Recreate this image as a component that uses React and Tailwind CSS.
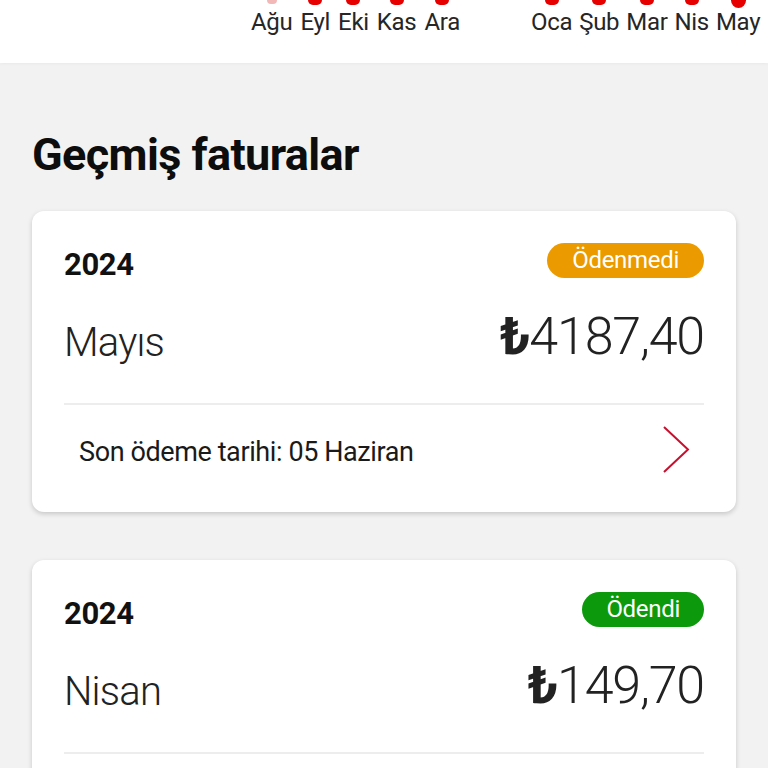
const GROUP_A = [
  { m: 'Ağu', faint: true },
  { m: 'Eyl' },
  { m: 'Eki' },
  { m: 'Kas' },
  { m: 'Ara' },
];
const GROUP_B = [
  { m: 'Oca' },
  { m: 'Şub' },
  { m: 'Mar' },
  { m: 'Nis' },
  { m: 'May', current: true },
];

const BILLS = [
  { year: '2024', month: 'Mayıs', amount: '4187,40', paid: false, due: 'Son ödeme tarihi: 05 Haziran' },
  { year: '2024', month: 'Nisan', amount: '149,70', paid: true, due: 'Ödeme tarihi: 02 Mayıs' },
];

function Month({ m, faint, current }) {
  let bar = 'h-[5px] w-[14px] rounded-b-full bg-[#e60000]';
  if (faint) bar = 'h-[4px] w-[10px] rounded-b-full bg-[#f2b8b8]';
  if (current) bar = 'h-[8px] w-[15px] rounded-b-full bg-[#e60000]';
  return (
    <div className="flex flex-col items-center">
      <div className="flex h-[5px] items-start overflow-visible">
        <div className={bar} />
      </div>
      <span className="mt-[3px] text-[24px] leading-[28px] tracking-[-0.3px] text-[#262626]">{m}</span>
    </div>
  );
}

function Chevron() {
  return (
    <svg width="28" height="49" viewBox="0 0 28 49" fill="none">
      <polyline points="2,2 26,24.5 2,47" stroke="#c8102e" strokeWidth="2" strokeLinejoin="miter" />
    </svg>
  );
}

function BillCard({ bill }) {
  return (
    <div className="rounded-[12px] bg-white px-[32px] shadow-[0_2px_5px_rgba(0,0,0,0.18)]">
      <div className="flex h-[67px] items-end justify-between">
        <span className="mb-[-7px] text-[31px] font-bold leading-[40px] tracking-[-0.4px] text-[#111]">{bill.year}</span>
        {bill.paid ? (
          <span className="rounded-full bg-[#0c9a0c] px-[24px] text-[24px] leading-[35px] tracking-[-0.3px] text-white">Ödendi</span>
        ) : (
          <span className="rounded-full bg-[#eb9a00] px-[25px] text-[24px] leading-[35px] tracking-[-0.3px] text-white">Ödenmedi</span>
        )}
      </div>
      <div className="flex items-end justify-between pt-[33px] pb-[40px]">
        <span className="text-[40px] font-light leading-[40px] tracking-[-0.8px] text-[#222]">{bill.month}</span>
        <span className="text-[52px] font-light leading-[52px] tracking-[-1.2px] text-[#222]">
          <span className="font-bold">₺</span>
          {bill.amount}
        </span>
      </div>
      <div className="h-[2px] bg-[#ededed]" />
      <div className="flex h-[88px] items-center justify-between pl-[15px] pr-[14px]">
        <span className="mt-[6px] text-[27px] leading-[34px] tracking-[-0.4px] text-[#1a1a1a]">{bill.due}</span>
        <Chevron />
      </div>
      <div className="h-[19px]" />
    </div>
  );
}

export default function App() {
  return (
    <div className="h-[768px] overflow-hidden bg-[#f2f2f2] font-['Roboto',sans-serif]">
      {/* chart strip, scrolled to latest months */}
      <div className="flex h-[63px] items-start bg-white pl-[251px] shadow-[0_1px_3px_rgba(0,0,0,0.04)]">
        <div className="flex gap-[8px]">
          {GROUP_A.map((x) => (
            <Month key={x.m} {...x} />
          ))}
        </div>
        <div className="ml-[71px] flex gap-[7px]">
          {GROUP_B.map((x) => (
            <Month key={x.m} {...x} />
          ))}
        </div>
      </div>

      <div className="px-[32px]">
        <h2 className="pt-[64px] pb-[28px] text-[45px] font-bold leading-[56px] tracking-[-0.6px] text-[#0d0d0d]">
          Geçmiş faturalar
        </h2>
        <div className="flex flex-col gap-[48px]">
          {BILLS.map((b) => (
            <BillCard key={b.month} bill={b} />
          ))}
        </div>
      </div>
    </div>
  );
}
